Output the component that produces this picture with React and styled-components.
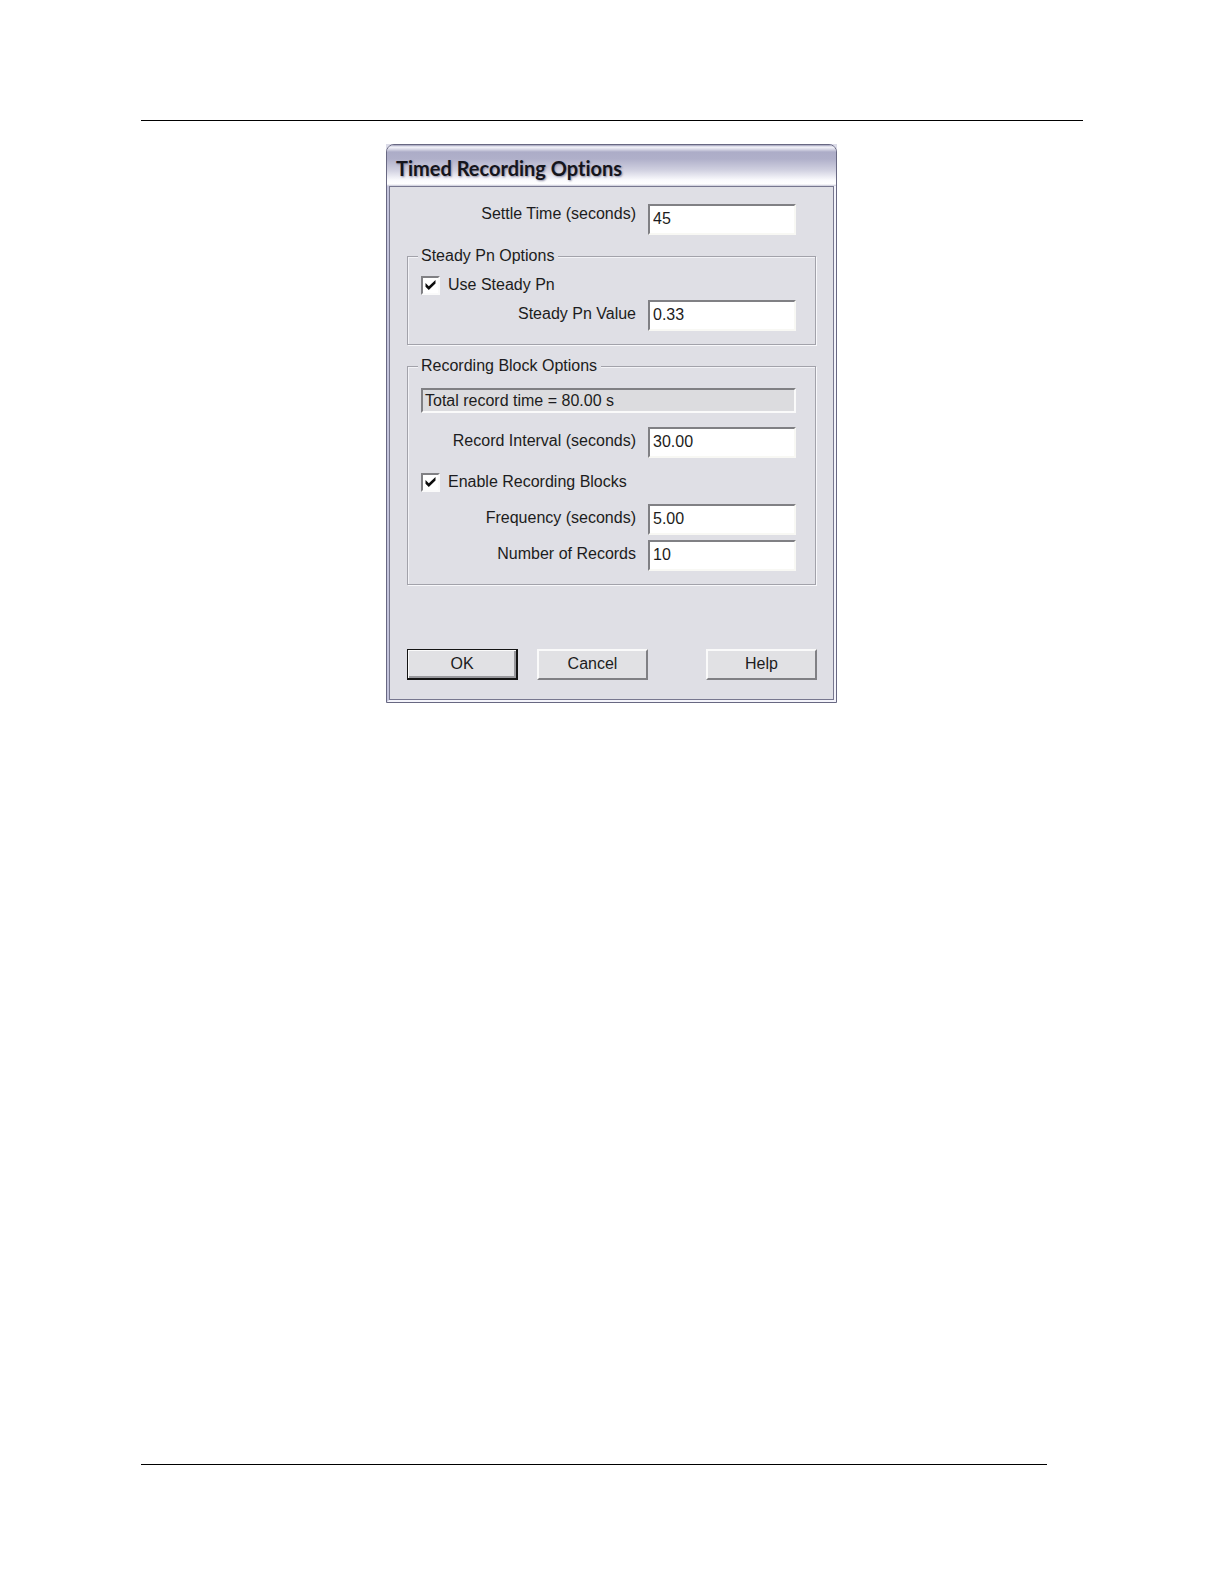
import React, { useState } from "react";
import styled, { createGlobalStyle } from "styled-components";

const face = "#dfdfe5";
const sans = '"Liberation Sans", Arial, sans-serif';

const GlobalStyle = createGlobalStyle`
  *, *::before, *::after { box-sizing: border-box; }
  body { margin: 0; background: #fff; color: #1c1c20; font: 16px/20px ${sans}; }
`;

const Page = styled.div`
  display: flex;
  flex-direction: column;
  min-height: 100vh;
  padding: 120px 141px 119px;
`;

const Rule = styled.hr`
  flex: none;
  width: auto;
  height: 1px;
  margin: 0 ${(p) => p.$inset || 0}px 0 0;
  border: 0;
  background: #000;
`;

const Main = styled.main`
  flex: 1;
  display: flex;
  justify-content: center;
  align-items: flex-start;
  padding: 23px 1px 0 0;
`;

const Corners = styled.div`
  width: 100%;
  max-width: 451px;
  background: linear-gradient(#dcdce8, #dcdce8) top / 100% 8px no-repeat;
`;

const Dialog = styled.section`
  border: 1px solid #686882;
  border-radius: 8px 8px 0 0;
  overflow: hidden;
`;

const TitleBar = styled.header`
  height: 41px;
  padding: 8px 9px 0;
  background: linear-gradient(
    #9c9cb8 0,
    #f4f4fa 2px,
    #dcdce9 4px,
    #acacc7 7px,
    #b0b0ca 14px,
    #d0d0e0 25px,
    #fafafd 35px,
    #fff 39px,
    #c8c8d8 41px
  );
`;

const Title = styled.h1`
  margin: 0;
  color: #15151c;
  font: bold 20px/30px Lato, sans-serif;
  font-variant-ligatures: none;
  text-shadow: 1px 1px 2px #8c8ca4;
  white-space: nowrap;
`;

const Frame = styled.div`
  border: 2px solid;
  border-color: transparent #f4f4fb #f4f4fb #c4c4dc;
  border-top: 0;
`;

const Client = styled.form`
  padding: 17px 16px 19px 17px;
  border: 1px solid #77778f;
  background: ${face};
`;

const Group = styled.fieldset`
  min-width: 0;
  margin: 11px 1px 0 0;
  padding: ${(p) => p.$top}px 19px 13px 13px;
  border: 1px solid #a2a2aa;
  box-shadow: 1px 1px 0 #f8f8fb, inset 1px 1px 0 #f3f3f7;
`;

const Legend = styled.legend`
  padding: 0 4px 0 3px;
  margin-left: -3px;
  background: ${face};
`;

const FieldRow = styled.div`
  display: flex;
  justify-content: flex-end;
  align-items: ${(p) => (p.$align === "top" ? "flex-start" : "center")};
  gap: 12px;
  margin-top: ${(p) => p.$gap || 0}px;
  padding-right: ${(p) => p.$inset || 0}px;

  label { padding-bottom: ${(p) => (p.$align === "top" ? 0 : 3)}px; }
`;

const TextBox = styled.input`
  width: 148px;
  height: 31px;
  padding: 0 3px 2px;
  border: 2px solid;
  border-color: #808084 #f8f8f4 #f8f8f4 #808084;
  border-radius: 0;
  outline: 0;
  background: #fff;
  color: inherit;
  font: inherit;
`;

const Readout = styled.output`
  display: block;
  height: 25px;
  padding: 1px 2px;
  border: 2px solid;
  border-color: #808084 #fafafa #fafafa #808084;
  background: #dcdcdf;
`;

const CheckRow = styled.label`
  display: flex;
  align-items: center;
  gap: 8px;
  margin-top: ${(p) => p.$gap || 0}px;
`;

const CheckStack = styled.span`
  display: grid;
  place-items: center;
  width: 19px;
  height: 19px;

  > * { grid-area: 1 / 1; }
  input:not(:checked) + svg { visibility: hidden; }
`;

const CheckBox = styled.input`
  appearance: none;
  width: 19px;
  height: 19px;
  margin: 0;
  border: 2px solid;
  border-color: #808084 #fafafa #fafafa #808084;
  background: #fff;
`;

const Tick = styled.svg`
  pointer-events: none;
`;

const ButtonRow = styled.div`
  display: flex;
  gap: 19px;
  margin-top: 64px;

  > :last-child { margin-left: auto; }
`;

const Button = styled.button`
  width: 111px;
  height: 31px;
  padding: 0 0 1px;
  border: 2px solid;
  border-color: ${(p) =>
    p.$primary ? "#141414" : "#fafafa #808084 #808084 #fafafa"};
  border-width: ${(p) => (p.$primary ? "1px 2px 2px 1px" : "2px")};
  border-radius: 0;
  background: #e1e1e4;
  box-shadow: ${(p) =>
    p.$primary ? "inset 1px 1px 0 #fafafa, inset -2px -2px 0 #98989c" : "none"};
  color: inherit;
  font: inherit;
`;

function Field({ id, label, value, gap, inset, align }) {
  return (
    <FieldRow $gap={gap} $inset={inset} $align={align}>
      <label htmlFor={id}>{label}</label>
      <TextBox id={id} type="text" defaultValue={value} />
    </FieldRow>
  );
}

function Check({ label, gap }) {
  const [checked, setChecked] = useState(true);
  return (
    <CheckRow $gap={gap}>
      <CheckStack>
        <CheckBox
          type="checkbox"
          checked={checked}
          onChange={(e) => setChecked(e.target.checked)}
        />
        <Tick width="13" height="13" viewBox="0 0 13 13" aria-hidden="true">
          <path d="M1.5 4 4.8 7.3 11.5 1v3.6L4.8 11 1.5 7.7Z" fill="#0c0c0c" />
        </Tick>
      </CheckStack>
      {label}
    </CheckRow>
  );
}

export default function App() {
  return (
    <>
      <GlobalStyle />
      <Page>
        <Rule />
        <Main>
          <Corners>
            <Dialog role="dialog" aria-labelledby="dialog-title">
              <TitleBar>
                <Title id="dialog-title">Timed Recording Options</Title>
              </TitleBar>
              <Frame>
                <Client onSubmit={(e) => e.preventDefault()}>
                  <Field id="settle" label="Settle Time (seconds)" value="45" inset={21} align="top" />
                  <Group $top={9}>
                    <Legend>Steady Pn Options</Legend>
                    <Check label="Use Steady Pn" />
                    <Field id="steady" label="Steady Pn Value" value="0.33" gap={5} />
                  </Group>
                  <Group $top={12}>
                    <Legend>Recording Block Options</Legend>
                    <Readout>Total record time = 80.00 s</Readout>
                    <Field id="interval" label="Record Interval (seconds)" value="30.00" gap={14} />
                    <Check label="Enable Recording Blocks" gap={14} />
                    <Field id="frequency" label="Frequency (seconds)" value="5.00" gap={12} />
                    <Field id="records" label="Number of Records" value="10" gap={5} />
                  </Group>
                  <ButtonRow>
                    <Button type="submit" $primary>OK</Button>
                    <Button type="button">Cancel</Button>
                    <Button type="button">Help</Button>
                  </ButtonRow>
                </Client>
              </Frame>
            </Dialog>
          </Corners>
        </Main>
        <Rule $inset={36} />
      </Page>
    </>
  );
}
